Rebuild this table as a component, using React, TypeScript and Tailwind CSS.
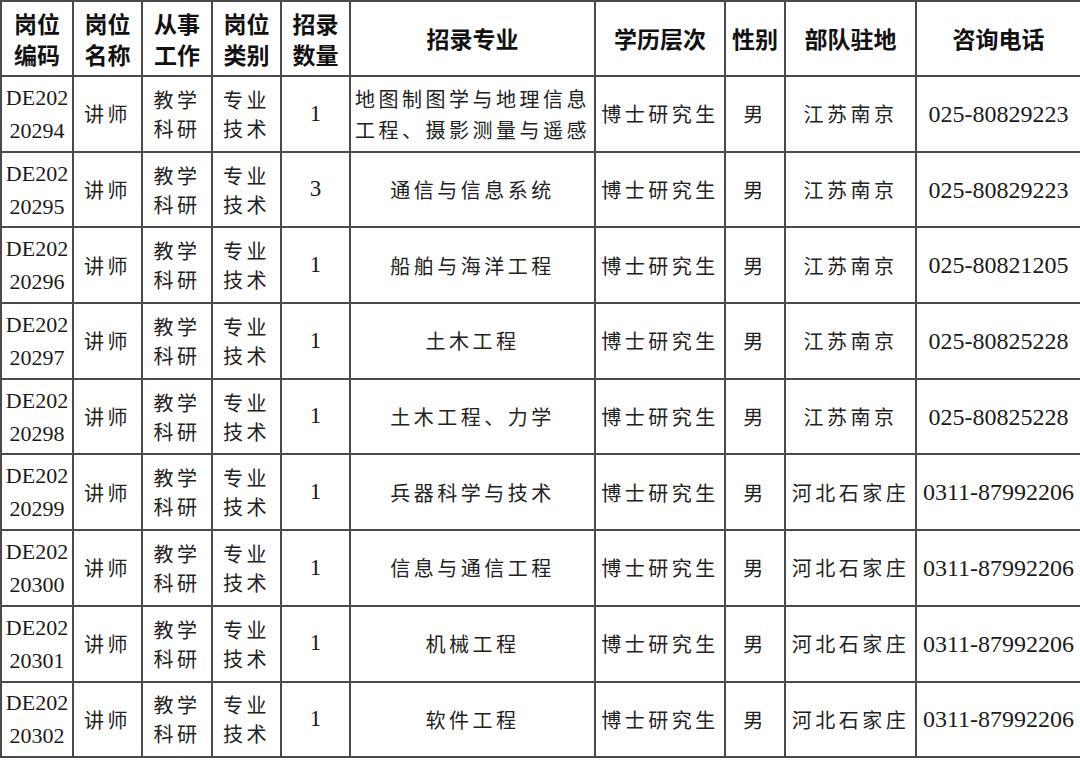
import React from "react";

// One row of the recruitment table
interface Post {
    code: string;
    count: string;
    major: string[];
    base: string;
    phone: string;
}

const posts: Post[] = [
    { code: "20294", count: "1", major: ["地图制图学与地理信息", "工程、摄影测量与遥感"], base: "江苏南京", phone: "025-80829223" },
    { code: "20295", count: "3", major: ["通信与信息系统"], base: "江苏南京", phone: "025-80829223" },
    { code: "20296", count: "1", major: ["船舶与海洋工程"], base: "江苏南京", phone: "025-80821205" },
    { code: "20297", count: "1", major: ["土木工程"], base: "江苏南京", phone: "025-80825228" },
    { code: "20298", count: "1", major: ["土木工程、力学"], base: "江苏南京", phone: "025-80825228" },
    { code: "20299", count: "1", major: ["兵器科学与技术"], base: "河北石家庄", phone: "0311-87992206" },
    { code: "20300", count: "1", major: ["信息与通信工程"], base: "河北石家庄", phone: "0311-87992206" },
    { code: "20301", count: "1", major: ["机械工程"], base: "河北石家庄", phone: "0311-87992206" },
    { code: "20302", count: "1", major: ["软件工程"], base: "河北石家庄", phone: "0311-87992206" },
];

const headers: string[][] = [
    ["岗位", "编码"],
    ["岗位", "名称"],
    ["从事", "工作"],
    ["岗位", "类别"],
    ["招录", "数量"],
    ["招录专业"],
    ["学历层次"],
    ["性别"],
    ["部队驻地"],
    ["咨询电话"],
];

const cell = "border-2 border-[#4a4a4a] p-0 text-center align-middle";
const cjk = "font-['Noto_Sans_CJK_SC',sans-serif] text-[20px] leading-[29px] tracking-[3.5px] text-[#222] font-normal";
const latin = "font-['Liberation_Serif','Noto_Sans_CJK_SC',serif] text-[#1a1a1a]";

function Lines({ lines }: { lines: string[] }) {
    return (
        <>
            {lines.map((l, i) => (
                <div key={i} className="whitespace-nowrap">{l}</div>
            ))}
        </>
    );
}

export default function App() {
    return (
        <div className="w-[1080px] h-[766px] bg-white overflow-hidden">
            <table className="table-fixed border-collapse w-[1080px]">
                <colgroup>
                    <col className="w-[72px]" />
                    <col className="w-[69px]" />
                    <col className="w-[70px]" />
                    <col className="w-[69px]" />
                    <col className="w-[69px]" />
                    <col className="w-[245px]" />
                    <col className="w-[130px]" />
                    <col className="w-[60px]" />
                    <col className="w-[131px]" />
                    <col className="w-[165px]" />
                </colgroup>
                <thead>
                    <tr className="h-[75px]">
                        {headers.map((h, i) => (
                            <th
                                key={i}
                                className={`${cell} font-['Noto_Sans_CJK_SC',sans-serif] font-bold text-[23px] leading-[31px] text-[#111]`}
                            >
                                <Lines lines={h} />
                            </th>
                        ))}
                    </tr>
                </thead>
                <tbody>
                    {posts.map((p) => (
                        <tr key={p.code} className="h-[75.7px]">
                            <td className={`${cell} ${latin} text-[22px] leading-[33px]`}>
                                <Lines lines={["DE202", p.code]} />
                            </td>
                            <td className={`${cell} ${cjk}`}>讲师</td>
                            <td className={`${cell} ${cjk}`}>
                                <Lines lines={["教学", "科研"]} />
                            </td>
                            <td className={`${cell} ${cjk}`}>
                                <Lines lines={["专业", "技术"]} />
                            </td>
                            <td className={`${cell} ${latin} text-[23px]`}>{p.count}</td>
                            <td className={`${cell} ${cjk} leading-[31px]`}>
                                <Lines lines={p.major} />
                            </td>
                            <td className={`${cell} ${cjk}`}>博士研究生</td>
                            <td className={`${cell} ${cjk}`}>男</td>
                            <td className={`${cell} ${cjk}`}>{p.base}</td>
                            <td className={`${cell} ${latin} text-[24px]`}>{p.phone}</td>
                        </tr>
                    ))}
                </tbody>
            </table>
        </div>
    );
}
